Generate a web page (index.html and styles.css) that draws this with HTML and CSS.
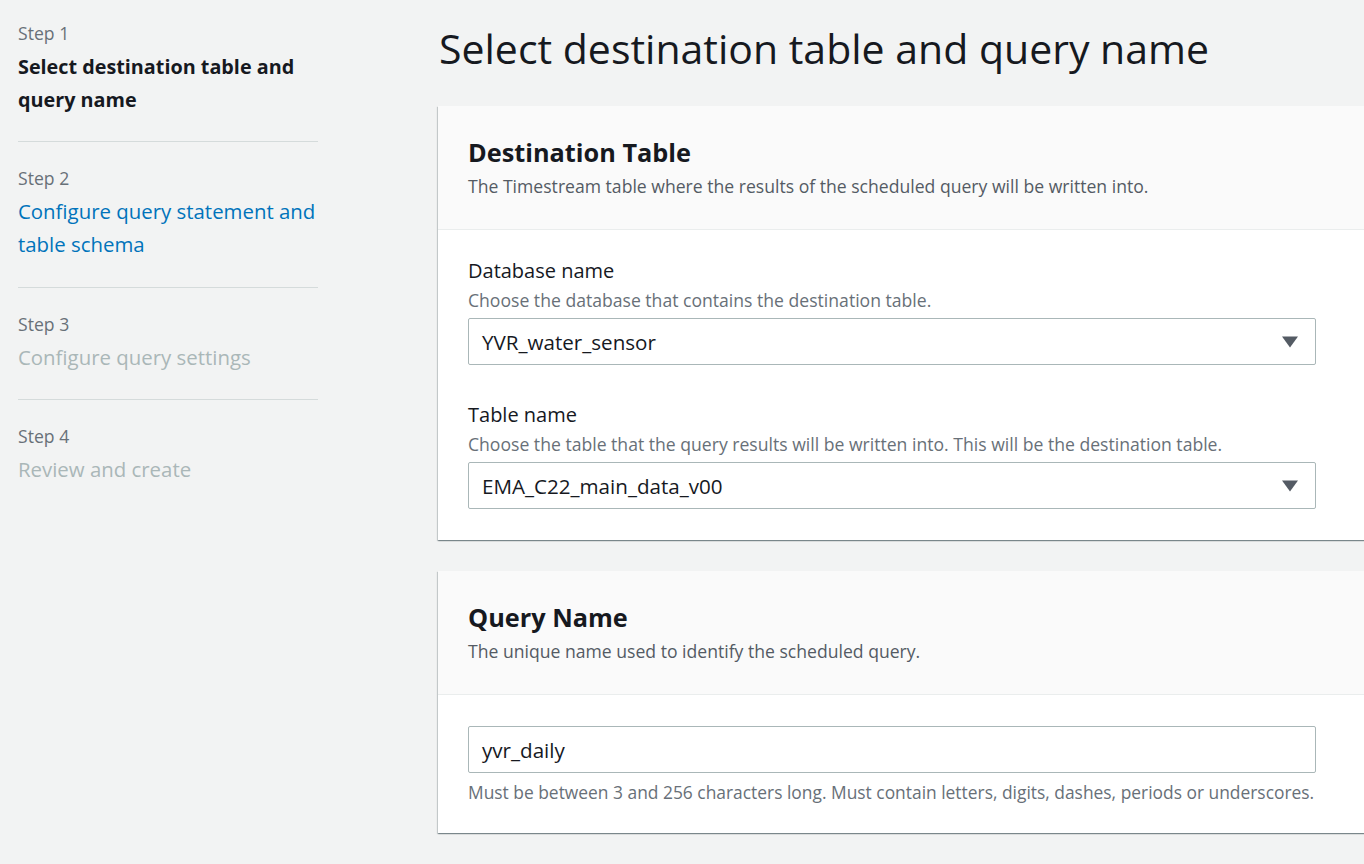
FILE: index.html
```html
<!DOCTYPE html>
<html lang="en">
<head>
<meta charset="utf-8">
<title>Select destination table and query name</title>
<link rel="stylesheet" href="styles.css">
</head>
<body>
<div class="layout">
  <nav class="steps">
    <div class="step">
      <div class="step-label">Step 1</div>
      <div class="step-title current">Select destination table and query name</div>
    </div>
    <div class="step">
      <div class="step-label">Step 2</div>
      <a class="step-title link" href="#">Configure query statement and table schema</a>
    </div>
    <div class="step">
      <div class="step-label">Step 3</div>
      <div class="step-title disabled">Configure query settings</div>
    </div>
    <div class="step">
      <div class="step-label">Step 4</div>
      <div class="step-title disabled">Review and create</div>
    </div>
  </nav>
  <main class="main">
    <h1 class="page-title">Select destination table and query name</h1>
    <section class="card">
      <header class="card-header">
        <h2 class="card-title">Destination Table</h2>
        <p class="card-desc">The Timestream table where the results of the scheduled query will be written into.</p>
      </header>
      <div class="card-body first">
        <div class="field">
          <div class="field-label">Database name</div>
          <div class="field-desc">Choose the database that contains the destination table.</div>
          <div class="select">
            <span>YVR_water_sensor</span>
            <svg class="caret" width="16" height="12" viewBox="0 0 16 12"><path d="M0 0.5 H16 L8 11.5 Z" fill="#545b64"/></svg>
          </div>
        </div>
        <div class="field">
          <div class="field-label">Table name</div>
          <div class="field-desc">Choose the table that the query results will be written into. This will be the destination table.</div>
          <div class="select">
            <span>EMA_C22_main_data_v00</span>
            <svg class="caret" width="16" height="12" viewBox="0 0 16 12"><path d="M0 0.5 H16 L8 11.5 Z" fill="#545b64"/></svg>
          </div>
        </div>
      </div>
    </section>
    <section class="card">
      <header class="card-header">
        <h2 class="card-title">Query Name</h2>
        <p class="card-desc">The unique name used to identify the scheduled query.</p>
      </header>
      <div class="card-body second">
        <div class="input">yvr_daily</div>
        <div class="field-hint">Must be between 3 and 256 characters long. Must contain letters, digits, dashes, periods or underscores.</div>
      </div>
    </section>
  </main>
</div>
</body>
</html>
```

FILE: styles.css
```css
html, body {
  margin: 0;
  padding: 0;
  background: #f2f3f3;
  overflow: hidden;
}
body {
  font-family: "Open Sans", "Noto Sans", sans-serif;
  color: #16191f;
  width: 1364px;
  height: 864px;
}
.layout {
  display: grid;
  grid-template-columns: 438px 960px;
}
.steps {
  padding: 22px 0 0 18px;
  width: 300px;
}
.step {
  border-bottom: 1px solid #d5dbdb;
  padding-bottom: 25px;
  margin-bottom: 25px;
}
.step:nth-child(2) {
  padding-bottom: 26px;
}
.step:last-child {
  border-bottom: none;
}
.step-label {
  font-size: 17.6px;
  line-height: 22px;
  color: #687078;
  margin-bottom: 6px;
}
.step-title {
  display: block;
  font-size: 20.4px;
  line-height: 33px;
  text-decoration: none;
}
.step-title.current {
  font-weight: 700;
  font-size: 19.8px;
  color: #16191f;
}
.step-title.link {
  color: #0073bb;
}
.step-title.disabled {
  color: #aab7b8;
}
.main {
  display: flex;
  flex-direction: column;
}
.page-title {
  margin: 0;
  padding: 22px 0 0 1px;
  height: 106px;
  box-sizing: border-box;
  font-size: 41px;
  line-height: 52px;
  font-weight: 400;
  color: #16191f;
}
.card {
  background: #fff;
  margin-bottom: 31px;
  box-shadow: 0 1px 1px 0 rgba(0, 28, 36, 0.3), 1px 1px 1px 0 rgba(0, 28, 36, 0.15), -1px 1px 1px 0 rgba(0, 28, 36, 0.15);
}
.card-header {
  background: #fafafa;
  border-bottom: 1px solid #eaeded;
  padding: 29px 30px 0 30px;
  height: 124px;
  box-sizing: border-box;
}
.card-title {
  margin: 0;
  font-size: 25.3px;
  line-height: 34px;
  font-weight: 700;
}
.card-desc {
  margin: 6px 0 0 0;
  font-size: 17.6px;
  line-height: 22px;
  color: #545b64;
}
.card-body {
  padding: 0 30px;
}
.card-body.first {
  padding-top: 28px;
  padding-bottom: 31px;
}
.card-body.second {
  padding-top: 31px;
  padding-bottom: 30px;
}
.field + .field {
  margin-top: 37px;
}
.field-label {
  font-size: 20px;
  line-height: 26px;
}
.field-desc {
  margin-top: 5px;
  font-size: 17.6px;
  line-height: 22px;
  color: #687078;
}
.select, .input {
  width: 848px;
  height: 47px;
  box-sizing: border-box;
  border: 1px solid #aab7b8;
  border-radius: 2px;
  background: #fff;
  display: flex;
  align-items: center;
  padding: 0 17px 0 13px;
  font-size: 20.6px;
  color: #16191f;
}
.select {
  margin-top: 7px;
  justify-content: space-between;
}
.field-hint {
  margin-top: 8px;
  font-size: 17.4px;
  line-height: 22px;
  color: #687078;
}
```
